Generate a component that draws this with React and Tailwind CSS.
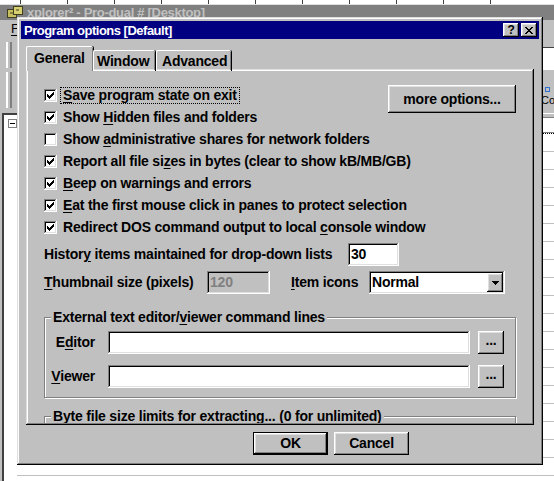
import React from 'react'

const font = "font-['Liberation_Sans',Arial,sans-serif]"
const txt = 'text-[14px] font-bold leading-[15px] tracking-[-0.2px] text-black'
const raised = 'bg-[#c0c0c0] shadow-[inset_-1px_-1px_#000,inset_1px_1px_#fff,inset_-2px_-2px_#808080,inset_2px_2px_#dfdfdf]'
const sunken = 'bg-white shadow-[inset_-1px_-1px_#fff,inset_1px_1px_#808080,inset_-2px_-2px_#dfdfdf,inset_2px_2px_#000]'
const frame = 'bg-[#c0c0c0] shadow-[inset_-1px_-1px_#000,inset_1px_1px_#dfdfdf,inset_-2px_-2px_#808080,inset_2px_2px_#fff]'

const K = ({ children }) => <span className="underline underline-offset-[2px] decoration-1">{children}</span>

function Check({ on }) {
  return (
    <span className={`w-[13px] h-[13px] shrink-0 flex items-center justify-center ${sunken}`}>
      {on && (
        <svg width="7" height="7" viewBox="0 0 7 7" shapeRendering="crispEdges">
          <path d="M0 2h1v3h-1zM1 3h1v3h-1zM2 4h1v3h-1zM3 3h1v3h-1zM4 2h1v3h-1zM5 1h1v3h-1zM6 0h1v3h-1z" fill="#000" />
        </svg>
      )}
    </span>
  )
}

function Row({ on, focus, children }) {
  return (
    <div className="h-[22px] flex items-center whitespace-nowrap">
      <Check on={on} />
      <span className={`ml-[3px] px-[2px] border border-dotted ${focus ? 'border-black' : 'border-transparent'}`}>{children}</span>
    </div>
  )
}

function Btn({ className = '', children }) {
  return <div className={`flex items-center justify-center ${raised} ${className}`}>{children}</div>
}

export default function App() {
  return (
    <div className={`relative w-[554px] h-[481px] overflow-hidden bg-[#c0c0c0] ${font}`}>
      {/* application window behind the dialog */}
      <div className="flex flex-col h-full">
        <div className="h-[5px] bg-white flex gap-[46px] pl-[20px] border-b border-[#dfdfdf]">
          {[0, 1, 2, 3, 4, 5, 6, 7, 8, 9, 10].map((i) => (
            <span key={i} className="w-[1px] h-[4px] bg-[#404040]" />
          ))}
        </div>
        <div className="h-[15px] bg-[#808080] flex items-center pl-[7px]">
          <svg width="16" height="13" viewBox="0 0 16 13">
            <rect x="0.5" y="3.5" width="9" height="8" fill="#c8c060" stroke="#404020" />
            <rect x="6.5" y="0.5" width="9" height="8" fill="#d8d070" stroke="#404020" />
            <path d="M3 7h3M9 4h3" stroke="#404020" />
          </svg>
          <span className="ml-[4px] text-[13px] font-bold tracking-[-0.3px] text-[#c0c0c0] leading-none">xplorer² - Pro-dual # [Desktop]</span>
        </div>
        <div className="flex-1 flex">
          <div className="w-[17px] flex flex-col border-l-[2px] border-[#c0c0c0]">
            <div className="h-[18px] pl-[9px] text-[13px] leading-[18px] text-black"><K>F</K></div>
            <div className="h-[4px]" />
            <div className="h-[26px] ml-[4px] flex gap-[2px]">
              <span className="w-[2px] bg-white" />
              <span className="w-[2px] bg-[#808080]" />
            </div>
            <div className="h-[4px]" />
            <div className="h-[36px] ml-[4px] flex gap-[2px]">
              <span className="w-[2px] bg-white" />
              <span className="w-[2px] bg-[#808080]" />
            </div>
            <div className="h-[5px]" />
            <div className="flex-1 bg-white border-l-[2px] border-t-[2px] border-[#404040] relative">
              <span className="absolute left-[4px] top-[4px] w-[9px] h-[9px] border border-[#808080] bg-white flex items-center justify-center">
                <span className="w-[5px] h-[1px] bg-black" />
              </span>
            </div>
          </div>
          <div className="flex-1 flex flex-col">
            <div className="h-[27px]" />
            <div className="h-[23px] bg-white border-t border-[#404040]" />
            <div className="h-[22px] flex items-end pl-[528px]">
              <span className="w-[5px] h-[5px] border border-[#3070d0]" />
            </div>
            <div className="h-[16px] text-[11px] leading-[16px] text-black pl-[524px] whitespace-nowrap">Col</div>
            <div className="h-[6px] border-b border-white" />
            <div className="h-[4px] border-b border-[#808080]" />
            <div className="h-[15px] bg-white border-b border-[#808080]" />
            <div className="flex-1 bg-white bg-[repeating-linear-gradient(to_bottom,transparent_0,transparent_17px,#c0c0c0_17px,#c0c0c0_18px)] border-t border-dotted border-black" />
          </div>
        </div>
      </div>

      {/* Program options dialog */}
      <div className={`absolute left-[17px] top-[17px] w-[526px] h-[448px] p-[4px] flex flex-col ${frame} ${txt}`}>
        <div className="h-[18px] bg-[#000080] flex items-center pl-[3px] pr-[2px]">
          <span className="text-white text-[13px] tracking-[-0.5px] flex-1">Program options [Default]</span>
          <Btn className="w-[16px] h-[14px] text-[12px] leading-none">?</Btn>
          <Btn className="w-[16px] h-[14px] ml-[2px]">
            <svg width="8" height="7" viewBox="0 0 8 7" shapeRendering="crispEdges">
              <path d="M0 0h2v1h-2zM6 0h2v1h-2zM1 1h2v1h-2zM5 1h2v1h-2zM2 2h4v1h-4zM3 3h2v1h-2zM2 4h4v1h-4zM1 5h2v1h-2zM5 5h2v1h-2zM0 6h2v1h-2zM6 6h2v1h-2z" fill="#000" />
            </svg>
          </Btn>
        </div>

        {/* tabs */}
        <div className="mt-[7px] ml-[5px] h-[25px] -mb-[2px] flex items-end relative z-10">
          <div className="w-[67px] h-[25px] bg-[#c0c0c0] border-l border-t border-white rounded-tl-[2px] rounded-tr-[2px] shadow-[inset_-1px_0_#808080,1px_0_#000] pl-[7px] pt-[4px]">General</div>
          <div className="w-[62px] h-[21px] border-l border-t border-white rounded-tl-[2px] rounded-tr-[2px] shadow-[inset_-1px_0_#808080,1px_0_#000] border-b border-b-white pl-[3px] pt-[3px]">Window</div>
          <div className="ml-[1px] w-[75px] h-[21px] border-l border-t border-white rounded-tl-[2px] rounded-tr-[2px] shadow-[inset_-1px_0_#808080,1px_0_#000] border-b border-b-white pl-[5px] pt-[3px]">Advanced</div>
        </div>

        {/* tab panel */}
        <div className={`mx-[5px] h-[356px] overflow-hidden p-[2px] ${frame}`}>
          <div className="h-full overflow-hidden pl-[16px] pr-[16px] pt-[13px]">
            <div className="flex">
              <div className="flex-1 min-w-0 flex flex-col">
                <Row on focus><K>S</K>ave program state on exit</Row>
                <Row on>Show <K>H</K>idden files and folders</Row>
                <Row>Show <K>a</K>dministrative shares for network folders</Row>
                <Row on>Report all file si<K>z</K>es in bytes (clear to show kB/MB/GB)</Row>
                <Row on><K>B</K>eep on warnings and errors</Row>
                <Row on><K>E</K>at the first mouse click in panes to protect selection</Row>
                <Row on>Redirect DOS command output to local <K>c</K>onsole window</Row>
              </div>
              <Btn className="mt-[1px] w-[128px] h-[28px] shrink-0">more options...</Btn>
            </div>

            <div className="mt-[5px] h-[23px] flex items-center whitespace-nowrap">
              <span className="w-[304px]">Histor<K>y</K> items maintained for drop-down lists</span>
              <div className={`w-[51px] h-[23px] pl-[3px] flex items-center ${sunken}`}>30</div>
            </div>

            <div className="mt-[5px] h-[23px] flex items-center whitespace-nowrap">
              <span className="w-[163px]"><K>T</K>humbnail size (pixels)</span>
              <div className="w-[63px] h-[23px] pl-[3px] flex items-center bg-[#c0c0c0] text-[#808080] shadow-[inset_-1px_-1px_#fff,inset_1px_1px_#808080,inset_-2px_-2px_#dfdfdf,inset_2px_2px_#000]">120</div>
              <span className="ml-[21px] w-[78px]"><K>I</K>tem icons</span>
              <div className={`w-[136px] h-[23px] pl-[3px] pr-[2px] flex items-center ${sunken}`}>
                <span className="flex-1">Normal</span>
                <Btn className="w-[16px] h-[19px]">
                  <svg width="7" height="4" viewBox="0 0 7 4" shapeRendering="crispEdges">
                    <path d="M0 0h7v1h-7zM1 1h5v1h-5zM2 2h3v1h-3zM3 3h1v1h-1z" fill="#000" />
                  </svg>
                </Btn>
              </div>
            </div>

            <fieldset className="mt-[16px] w-[472px] border border-[#808080] shadow-[1px_1px_#fff,inset_1px_1px_#fff] pb-[9px]">
              <legend className="ml-[6px] px-[2px] bg-[#c0c0c0] whitespace-nowrap">External text editor/<K>v</K>iewer command lines</legend>
              <div className="mt-[6px] h-[23px] flex items-center">
                <span className="w-[50px] text-right">E<K>d</K>itor</span>
                <div className={`ml-[13px] w-[362px] h-[23px] ${sunken}`} />
                <Btn className="ml-[8px] w-[26px] h-[23px] pb-[4px]">...</Btn>
              </div>
              <div className="mt-[11px] h-[23px] flex items-center">
                <span className="w-[50px] text-right"><K>V</K>iewer</span>
                <div className={`ml-[13px] w-[362px] h-[23px] ${sunken}`} />
                <Btn className="ml-[8px] w-[26px] h-[23px] pb-[4px]">...</Btn>
              </div>
            </fieldset>

            <fieldset className="mt-[11px] w-[472px] h-[40px] border border-[#808080] shadow-[1px_1px_#fff,inset_1px_1px_#fff]">
              <legend className="ml-[6px] px-[2px] bg-[#c0c0c0] whitespace-nowrap">Byte file size limits for extracting... (0 for unlimited)</legend>
            </fieldset>
          </div>
        </div>

        {/* dialog buttons */}
        <div className="mt-[7px] ml-[232px] flex gap-[6px]">
          <div className="w-[75px] h-[23px] border border-black">
            <Btn className="w-full h-full">OK</Btn>
          </div>
          <Btn className="w-[75px] h-[23px]">Cancel</Btn>
        </div>
      </div>
    </div>
  )
}
